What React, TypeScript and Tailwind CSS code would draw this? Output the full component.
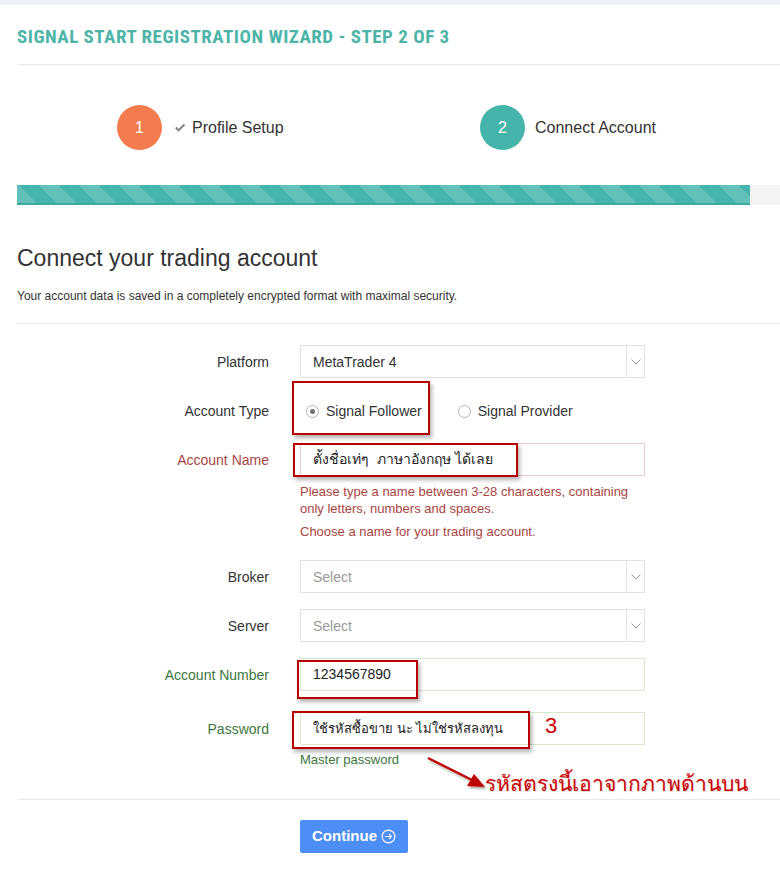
import React from "react";

function Chevron() {
  return (
    <svg width="10" height="6" viewBox="0 0 10 6" fill="none">
      <path d="M0.5 0.5 L5 5 L9.5 0.5" stroke="#9a9a9a" strokeWidth="1" />
    </svg>
  );
}

function SelectBox({ value, placeholder }: { value?: string; placeholder?: boolean }) {
  return (
    <div className="flex h-[33px] w-[345px] border border-[#e2e2e2] bg-white">
      <div className={`flex flex-1 items-center pl-[12px] pt-[1px] text-[14px] ${placeholder ? "text-[#999]" : "text-[#333]"}`}>
        {value}
      </div>
      <div className="flex w-[18px] items-center justify-center border-l border-[#e2e2e2]">
        <Chevron />
      </div>
    </div>
  );
}

function Row({ label, labelColor, children, className }: { label: string; labelColor: string; children: React.ReactNode; className?: string }) {
  return (
    <div className={`flex items-center ${className ?? ""}`}>
      <div className={`w-[252px] shrink-0 pt-[1px] text-right text-[14px] ${labelColor}`}>{label}</div>
      <div className="ml-[31px]">{children}</div>
    </div>
  );
}

function Radio({ checked }: { checked?: boolean }) {
  return (
    <span className="flex h-[13px] w-[13px] items-center justify-center rounded-full border border-[#b5b5b5] bg-white">
      {checked && <span className="h-[5px] w-[5px] rounded-full bg-[#707070]" />}
    </span>
  );
}

export default function App() {
  return (
    <div className="relative min-h-[880px] w-full bg-white font-['Liberation_Sans','Noto_Sans',Arial,sans-serif] text-[#333]">
      <div className="h-[5px] bg-[#eef1f5]" />
      <div className="pl-[17px]">
        <div className="border-b border-[#e9e9e9] pb-[18px] pt-[23px]">
          <h1 className="font-['Liberation_Sans_Narrow','Roboto_Condensed','Liberation_Sans',sans-serif] text-[19px] font-bold leading-[18px] tracking-[0.5px] text-[#4db5a8]">
            SIGNAL START REGISTRATION WIZARD - STEP 2 OF 3
          </h1>
        </div>

        {/* steps */}
        <div className="mt-[40px] flex items-center">
          <div className="flex w-[463px] items-center pl-[100px]">
            <div className="flex h-[45px] w-[45px] items-center justify-center rounded-full bg-[#f47b4e] text-[16px] text-white">1</div>
            <svg className="ml-[12px]" width="12" height="10" viewBox="0 0 12 10">
              <path d="M1 5.2 L2.6 3.8 L4.6 5.8 L9.6 0.8 L11.2 2.3 L4.6 8.8 Z" fill="#8a8a8a" />
            </svg>
            <span className="ml-[6px] text-[16px] text-[#333]">Profile Setup</span>
          </div>
          <div className="flex items-center">
            <div className="flex h-[45px] w-[45px] items-center justify-center rounded-full bg-[#45b5ac] text-[16px] text-white">2</div>
            <span className="ml-[10px] text-[16px] text-[#333]">Connect Account</span>
          </div>
        </div>

        {/* progress */}
        <div className="mt-[35px] flex h-[20px]">
          <div className="h-[20px] w-[733px] border-b-2 border-[#3ea99f] bg-[repeating-linear-gradient(45deg,#62c1b8_0px,#62c1b8_14.14px,#46b5ad_14.14px,#46b5ad_28.28px)]" />
          <div className="flex-1 bg-[#f3f3f3]" />
        </div>

        <div className="border-b border-[#e9e9e9] pb-[19px]">
          <h2 className="mt-[38px] text-[23px] leading-[30px] text-[#333]">Connect your trading account</h2>
          <p className="mt-[15px] text-[12px] leading-[16px] text-[#333]">
            Your account data is saved in a completely encrypted format with maximal security.
          </p>
        </div>

        {/* form */}
        <div className="border-b border-[#e9e9e9] pb-[31px] pt-[21px]">
          <Row label="Platform" labelColor="text-[#333]">
            <SelectBox value="MetaTrader 4" />
          </Row>
          <Row label="Account Type" labelColor="text-[#333]" className="mt-[16px] h-[34px]">
            <div className="flex items-center pt-[1px] text-[14px] text-[#333]">
              <span className="ml-[6px]"><Radio checked /></span>
              <span className="ml-[7px]">Signal Follower</span>
              <span className="ml-[36px]"><Radio /></span>
              <span className="ml-[7px]">Signal Provider</span>
            </div>
          </Row>
          <Row label="Account Name" labelColor="text-[#a94442]" className="mt-[15px]">
            <div className="flex h-[33px] w-[345px] items-center border border-[#e8c9cc] pl-[12px] text-[14px] text-[#222]">
              ตั้งชื่อเท่ๆ&nbsp; ภาษาอังกฤษ ได้เลย
            </div>
          </Row>
          <div className="ml-[283px] w-[345px] text-[13px] leading-[17px] text-[#a94442]">
            <p className="mt-[7px]">Please type a name between 3-28 characters, containing only letters, numbers and spaces.</p>
            <p className="mt-[6px]">Choose a name for your trading account.</p>
          </div>
          <Row label="Broker" labelColor="text-[#333]" className="mt-[20px]">
            <SelectBox value="Select" placeholder />
          </Row>
          <Row label="Server" labelColor="text-[#333]" className="mt-[16px]">
            <SelectBox value="Select" placeholder />
          </Row>
          <Row label="Account Number" labelColor="text-[#3c763d]" className="mt-[16px]">
            <div className="flex h-[33px] w-[345px] items-center border border-[#d6e9c6] pl-[12px] text-[14px] text-[#222]">
              1234567890
            </div>
          </Row>
          <Row label="Password" labelColor="text-[#3c763d]" className="mt-[21px]">
            <div className="flex h-[33px] w-[345px] items-center border border-[#d6e9c6] pl-[12px] text-[13px] text-[#222]">
              ใช้รหัสซื้อขาย นะ ไม่ใช่รหัสลงทุน
            </div>
          </Row>
          <p className="ml-[283px] mt-[6px] text-[13px] leading-[17px] text-[#3c763d]">Master password</p>
        </div>

        <div className="pb-[27px] pt-[20px]">
          <button className="ml-[283px] flex h-[33px] w-[108px] items-center justify-center gap-[4px] rounded-[2px] bg-[#4c8ef6] text-[15px] font-bold text-white">
            Continue
            <svg width="15" height="15" viewBox="0 0 16 16" fill="none">
              <circle cx="8" cy="8" r="6.8" stroke="white" strokeWidth="1.2" />
              <path d="M4.3 8 H11.2 M8.4 5.2 L11.2 8 L8.4 10.8" stroke="white" strokeWidth="1.2" />
            </svg>
          </button>
        </div>
      </div>

      {/* annotations */}
      <div className="absolute left-[292px] top-[381px] h-[54px] w-[138px] border-2 border-[#b80000] shadow-[2px_3px_4px_rgba(0,0,0,0.3)]" />
      <div className="absolute left-[293px] top-[443px] h-[34px] w-[225px] border-2 border-[#b80000] shadow-[2px_3px_4px_rgba(0,0,0,0.3)]" />
      <div className="absolute left-[297px] top-[660px] h-[39px] w-[121px] border-2 border-[#b80000] shadow-[2px_3px_4px_rgba(0,0,0,0.3)]" />
      <div className="absolute left-[292px] top-[711px] h-[38px] w-[238px] border-2 border-[#b80000] shadow-[2px_3px_4px_rgba(0,0,0,0.3)]" />
      <div className="absolute left-[545px] top-[713px] text-[22px] leading-[26px] text-[#cc0000]">3</div>
      <svg className="absolute left-[424px] top-[754px]" width="66" height="38" viewBox="0 0 66 38">
        <defs>
          <filter id="sh" x="-20%" y="-20%" width="150%" height="150%">
            <feDropShadow dx="1.5" dy="2" stdDeviation="1.2" floodColor="#000" floodOpacity="0.35" />
          </filter>
        </defs>
        <g filter="url(#sh)">
          <path d="M4 4 L48 26" stroke="#c00000" strokeWidth="2.2" />
          <path d="M61 33 L43 32 L50 20 Z" fill="#c00000" />
        </g>
      </svg>
      <div className="absolute left-[485px] top-[769px] text-[21px] leading-[30px] text-[#cc0000] [text-shadow:1px_1px_1px_rgba(0,0,0,0.15)]">
        รหัสตรงนี้เอาจากภาพด้านบน
      </div>
    </div>
  );
}
